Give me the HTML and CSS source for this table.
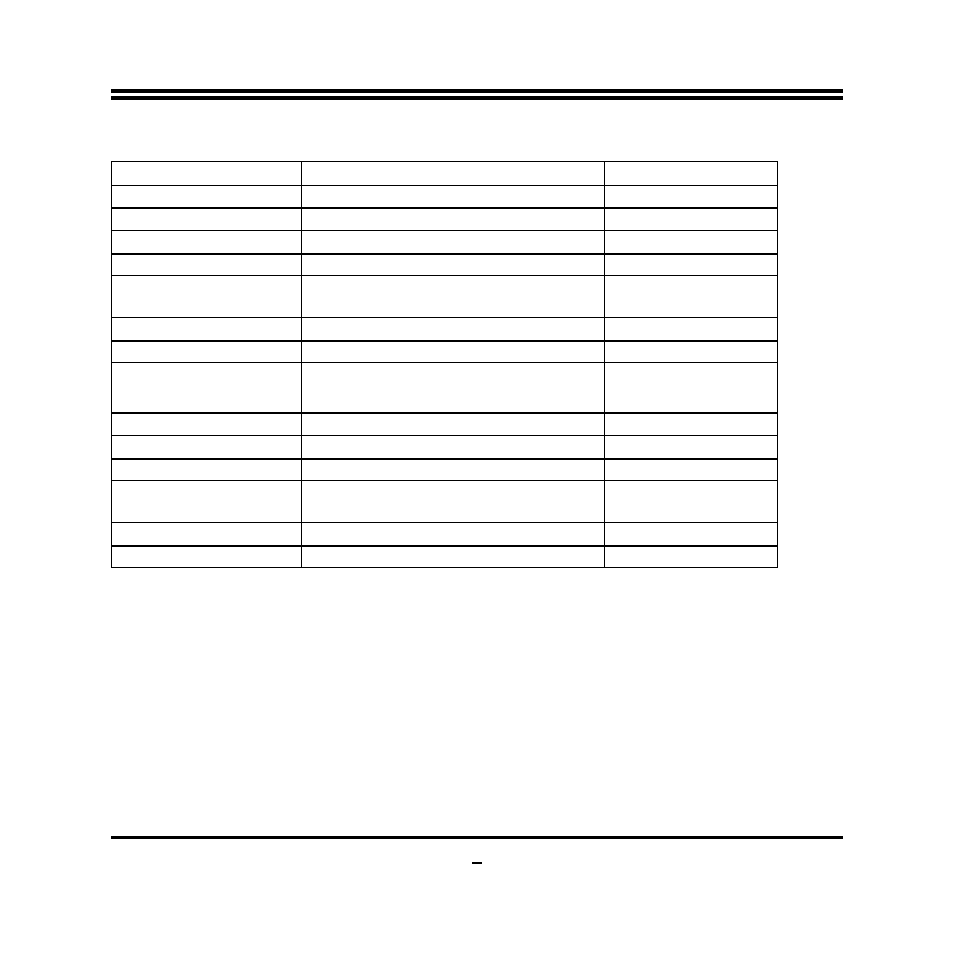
FILE: index.html
```html
<!DOCTYPE html>
<html lang="en">
<head>
<meta charset="utf-8">
<title>Page</title>
<link rel="stylesheet" href="styles.css">
</head>
<body>
<div class="page">
  <header class="head-rule">
    <div class="bar"></div>
    <div class="bar"></div>
  </header>
  <div class="grid-table">
    <div class="row h24 thin"><div class="cell"></div><div class="cell"></div><div class="cell"></div></div>
    <div class="row h22 thin"><div class="cell"></div><div class="cell"></div><div class="cell"></div></div>
    <div class="row h23 thick"><div class="cell"></div><div class="cell"></div><div class="cell"></div></div>
    <div class="row h23 thin"><div class="cell"></div><div class="cell"></div><div class="cell"></div></div>
    <div class="row h22 thick"><div class="cell"></div><div class="cell"></div><div class="cell"></div></div>
    <div class="row h42 thin"><div class="cell"></div><div class="cell"></div><div class="cell"></div></div>
    <div class="row h23 thin"><div class="cell"></div><div class="cell"></div><div class="cell"></div></div>
    <div class="row h22 thick"><div class="cell"></div><div class="cell"></div><div class="cell"></div></div>
    <div class="row h50 thin"><div class="cell"></div><div class="cell"></div><div class="cell"></div></div>
    <div class="row h23 thick"><div class="cell"></div><div class="cell"></div><div class="cell"></div></div>
    <div class="row h23 thin"><div class="cell"></div><div class="cell"></div><div class="cell"></div></div>
    <div class="row h22 thick"><div class="cell"></div><div class="cell"></div><div class="cell"></div></div>
    <div class="row h42 thin"><div class="cell"></div><div class="cell"></div><div class="cell"></div></div>
    <div class="row h23 thin"><div class="cell"></div><div class="cell"></div><div class="cell"></div></div>
    <div class="row h22 thick"><div class="cell"></div><div class="cell"></div><div class="cell"></div></div>
  </div>
  <footer class="foot">
    <div class="foot-rule"></div>
    <div class="page-num"></div>
  </footer>
</div>
</body>
</html>
```

FILE: styles.css
```css
* { box-sizing: border-box; }
html, body { margin: 0; padding: 0; background: #fff; }
body { font-family: "Liberation Sans", Arial, sans-serif; color: #000; }

.page {
  width: 954px;
  height: 954px;
  padding: 89px 111px 0 111px;
  display: flex;
  flex-direction: column;
}

.head-rule {
  display: flex;
  flex-direction: column;
  gap: 3px;
  width: 732px;
}
.bar { height: 4px; background: #000; }

.grid-table {
  margin-top: 61px;
  width: 667px;
  border-right: 1px solid #000;
  border-bottom: 1px solid #000;
}
.row {
  display: grid;
  grid-template-columns: 190px 303px 173px;
  border-top: 1px solid #000;
}
.row.thick { border-top-width: 2px; }
.cell { border-left: 1px solid #000; }

.h22 { height: 22px; }
.h23 { height: 23px; }
.h24 { height: 24px; }
.h42 { height: 42px; }
.h50 { height: 50px; }

.foot {
  margin-top: 268px;
  width: 732px;
  display: flex;
  flex-direction: column;
  align-items: center;
}
.foot-rule { width: 100%; height: 3px; background: #000; }
.page-num {
  margin-top: 23px;
  width: 10px;
  height: 2px;
  background: #000;
}
```
